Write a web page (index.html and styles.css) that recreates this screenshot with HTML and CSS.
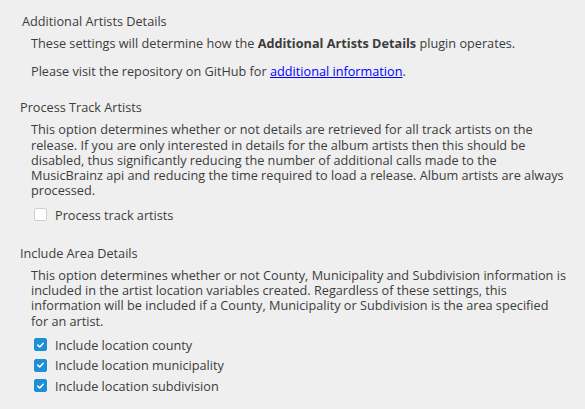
FILE: index.html
```html
<!DOCTYPE html>
<html lang="en">
<head>
    <meta charset="UTF-8">
    <title>Additional Artists Details</title>
    <link rel="stylesheet" href="styles.css">
</head>
<body>
    <div class="page">
        <section class="group group-intro">
            <h2 class="group-title">Additional Artists Details</h2>
            <div class="group-body">
                <p class="text">These settings will determine how the <b>Additional Artists Details</b> plugin operates.</p>
                <p class="text text-gap">Please visit the repository on GitHub for <a href="#">additional information</a>.</p>
            </div>
        </section>

        <section class="group">
            <h2 class="group-title">Process Track Artists</h2>
            <div class="group-body">
                <p class="text">This option determines whether or not details are retrieved for all track artists on the<br>release. If you are only interested in details for the album artists then this should be<br>disabled, thus significantly reducing the number of additional calls made to the<br>MusicBrainz api and reducing the time required to load a release. Album artists are always<br>processed.</p>
                <div class="checks">
                    <label class="check">
                        <span class="box"></span>
                        <span>Process track artists</span>
                    </label>
                </div>
            </div>
        </section>

        <section class="group">
            <h2 class="group-title">Include Area Details</h2>
            <div class="group-body">
                <p class="text">This option determines whether or not County, Municipality and Subdivision information is<br>included in the artist location variables created. Regardless of these settings, this<br>information will be included if a County, Municipality or Subdivision is the area specified<br>for an artist.</p>
                <div class="checks">
                    <label class="check">
                        <span class="box checked"><svg viewBox="0 0 14 14" width="14" height="14"><path d="M3.5 7.2 L6 9.5 L10.5 4.8" fill="none" stroke="#fff" stroke-width="2" stroke-linecap="round" stroke-linejoin="round"/></svg></span>
                        <span>Include location county</span>
                    </label>
                    <label class="check">
                        <span class="box checked"><svg viewBox="0 0 14 14" width="14" height="14"><path d="M3.5 7.2 L6 9.5 L10.5 4.8" fill="none" stroke="#fff" stroke-width="2" stroke-linecap="round" stroke-linejoin="round"/></svg></span>
                        <span>Include location municipality</span>
                    </label>
                    <label class="check">
                        <span class="box checked"><svg viewBox="0 0 14 14" width="14" height="14"><path d="M3.5 7.2 L6 9.5 L10.5 4.8" fill="none" stroke="#fff" stroke-width="2" stroke-linecap="round" stroke-linejoin="round"/></svg></span>
                        <span>Include location subdivision</span>
                    </label>
                </div>
            </div>
        </section>
    </div>
</body>
</html>
```

FILE: styles.css
```css
body {
    margin: 0;
    padding: 0;
    background-color: #efefef;
    color: #3c3c3c;
    font-family: 'Open Sans', 'Noto Sans', sans-serif;
    font-size: 12.7px;
}
.page {
    padding: 14px 0 0 20px;
}
.group {
    margin-bottom: 21px;
}
.group-title {
    margin: 0;
    font-size: 12.7px;
    font-weight: normal;
    line-height: 15px;
}
.group-intro .group-title {
    padding-left: 2px;
}
.group-body {
    padding: 7px 0 0 11px;
}
.text {
    margin: 0;
    line-height: 15.2px;
}
.text-gap {
    margin-top: 13px;
}
.text b {
    font-weight: bold;
}
.text a {
    color: #0000ff;
}
.checks {
    display: flex;
    flex-direction: column;
    padding-top: 6px;
}
.check {
    display: flex;
    align-items: center;
    gap: 8px;
    height: 20.5px;
    padding-left: 3px;
}
.box {
    width: 13px;
    height: 13px;
    border: 1px solid #cfcfcf;
    border-radius: 2px;
    background-color: #fff;
    box-sizing: border-box;
    display: flex;
    align-items: center;
    justify-content: center;
}
.box.checked {
    background-color: #1c8fd6;
    border-color: #1c8fd6;
}
```
